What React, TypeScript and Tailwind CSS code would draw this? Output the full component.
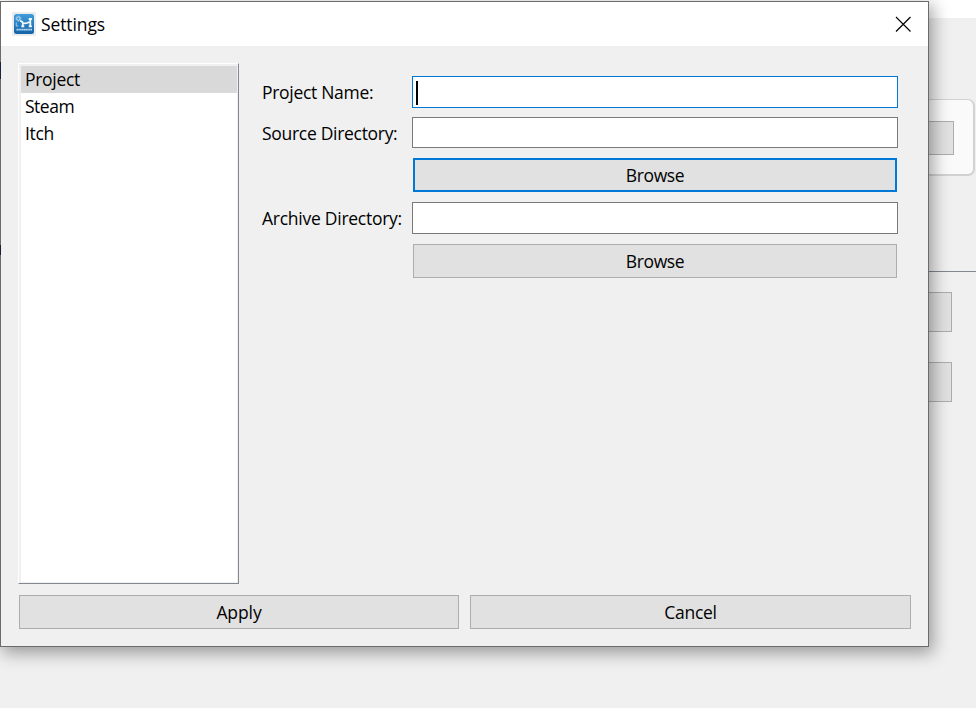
import React from "react";

const fontStack = "font-['Open_Sans','Noto_Sans',sans-serif]";

function PushButton({ label, className = "", textClass = "" }: { label: string; className?: string; textClass?: string }) {
  return (
    <button type="button" className={`flex h-[34px] items-center justify-center bg-[#e1e1e1] text-black ${className}`}>
      <span className={textClass}>{label}</span>
    </button>
  );
}

function AppIcon() {
  return (
    <svg width="24" height="24" viewBox="0 0 24 24" className="block shrink-0">
      <defs>
        <linearGradient id="iconBlue" x1="0" y1="0" x2="0" y2="1">
          <stop offset="0" stopColor="#3f9cda" />
          <stop offset="1" stopColor="#1463a6" />
        </linearGradient>
      </defs>
      <rect width="24" height="24" fill="#ececec" />
      <rect x="2" y="2" width="20" height="20" rx="2.5" fill="url(#iconBlue)" />
      <circle cx="6.4" cy="6.6" r="1.7" fill="none" stroke="#a5d0ee" strokeWidth="1.3" />
      <circle cx="6.4" cy="6.6" r="2.7" fill="none" stroke="#a5d0ee" strokeWidth=".7" strokeDasharray=".9 .8" />
      <path d="M8 9.2Q10.5 9 10.8 11.2M10.8 11Q14 12 17.5 10M18.3 6.5v8M16.7 7h3.2M16.7 14.4h3.2M10.8 11v3.4M9.3 14.4h3" fill="none" stroke="#f3faff" strokeWidth="1.8" />
      <path d="M4.3 10.5v3.5M4 14h2.5" fill="none" stroke="#8fc4ea" strokeWidth="1.1" />
      <path d="M4.5 17.7H20" stroke="#b5d6ef" strokeWidth="1.8" strokeDasharray="1.5 .3" />
    </svg>
  );
}

function MainWindow() {
  return (
    <div className="flex h-[708px] w-[976px] flex-col bg-[#f0f0f0]">
      <div className="h-[18px] shrink-0 bg-white" />
      <div className="mt-[81px] flex h-[77px] w-[975px] shrink-0 items-start justify-end rounded-[7px] border border-r-2 border-b-2 border-[#d2d2d2] bg-[#fafafa] pt-[21px] pr-[19px]">
        <div className="h-[34px] w-[300px] border border-[#adadad] bg-[#e1e1e1]" />
      </div>
      <div className="mt-[95px] h-px shrink-0 bg-[#828790]" />
      <div className="mt-5 flex w-[952px] flex-col items-end gap-[30px]">
        <div className="h-10 w-[300px] border border-[#adadad] bg-[#e1e1e1]" />
        <div className="h-10 w-[300px] border border-[#adadad] bg-[#e1e1e1]" />
      </div>
    </div>
  );
}

function SettingsDialog() {
  return (
    <div className="absolute top-px left-0 flex h-[646px] w-[929px] flex-col border border-[#6b6b6b] bg-[#f0f0f0] shadow-[3px_5px_16px_1px_rgba(0,0,0,0.36)]">
      <header className="flex h-11 shrink-0 items-center bg-white pl-[11px]">
        <AppIcon />
        <h1 className="mb-px ml-[5px] text-[17.5px] leading-6 tracking-[-0.1px]">Settings</h1>
        <svg width="16" height="16" viewBox="0 0 16 16" className="mr-[17px] mb-px ml-auto">
          <path d="M1 1 15.5 15.5M15.5 1 1 15.5" stroke="#000" strokeWidth="1.15" />
        </svg>
      </header>

      <div className="flex pt-[17px] pl-[17px]">
        <div className="h-[521px] w-[221px] shrink-0 border border-t-white border-r-[#828790] border-b-[#828790] border-l-white">
          <ul className="h-[519px] border-t-2 border-r border-b border-l-2 border-[#f0f0f0] bg-white text-[17.5px] leading-[27px] tracking-[-0.3px]">
            <li className="h-[27px] bg-[#d9d9d9] pl-1">Project</li>
            <li className="h-[27px] pl-1 tracking-[-0.5px]">Steam</li>
            <li className="h-[27px] pl-1">Itch</li>
          </ul>
        </div>

        <div className="mt-[13px] ml-[23px] grid w-[636px] grid-cols-[150px_486px] content-start text-[17.5px] tracking-[-0.3px]">
          <label className="h-8 leading-[33px]">Project Name:</label>
          <div className="flex h-8 items-center border border-[#0078d7] bg-white pl-[3px]">
            <span className="mt-px h-6 w-0.5 bg-black" />
          </div>
          <label className="mt-[9px] h-[31px] leading-[33px]">Source Directory:</label>
          <div className="mt-[9px] h-[31px] border border-[#7a7a7a] bg-white" />
          <PushButton label="Browse" textClass="tracking-[-0.4px]" className="col-start-2 mx-px mt-[10px] border-2 border-[#0078d7]" />
          <label className="mt-[10px] h-8 leading-[33px] tracking-[-0.26px]">Archive Directory:</label>
          <div className="mt-[10px] h-8 border border-[#7a7a7a] bg-white" />
          <PushButton label="Browse" textClass="tracking-[-0.4px]" className="col-start-2 mx-px mt-[10px] border border-[#adadad]" />
        </div>
      </div>

      <footer className="mt-[11px] flex gap-[11px] pl-[18px] text-[17.5px] tracking-[-0.3px]">
        <PushButton label="Apply" textClass="tracking-[-0.1px]" className="w-[440px] border border-[#adadad]" />
        <PushButton label="Cancel" className="w-[441px] border border-[#adadad]" />
      </footer>

      {/* Slivers of the main window's text showing past the dialog's left edge */}
      <span className="absolute top-[60px] -left-px h-[17px] w-px bg-[#1c2340]" />
      <span className="absolute top-[243px] -left-px h-[10px] w-px bg-[#1c2030]" />
    </div>
  );
}

export default function App() {
  return (
    <main className={`relative h-[708px] w-[976px] overflow-hidden bg-[#f0f0f0] text-black ${fontStack}`}>
      <MainWindow />
      <SettingsDialog />
    </main>
  );
}
